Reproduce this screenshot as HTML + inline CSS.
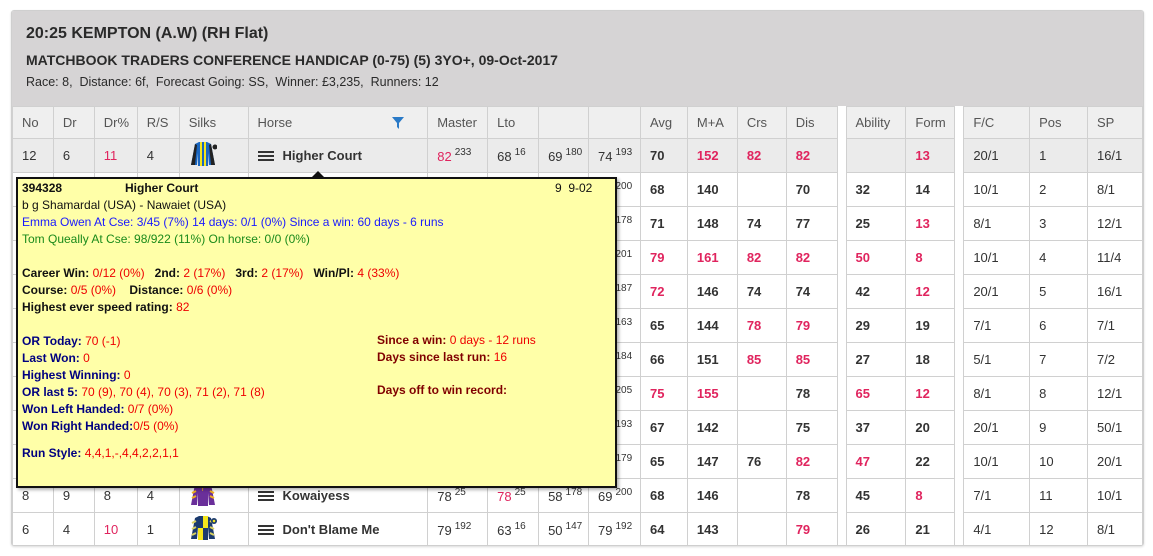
<!DOCTYPE html>
<html><head><meta charset="utf-8">
<style>
body{margin:0;background:#fff;font-family:"Liberation Sans",sans-serif;width:1153px;height:556px;overflow:hidden;position:relative}
.box{position:absolute;left:11px;top:10px;width:1131px;height:534px;border:1px solid #cfcfcf;border-radius:3px;box-shadow:0 1px 2px rgba(0,0,0,.15);overflow:hidden}
.hd{background:#d6d4d5;height:95px;padding:0 0 0 14px;color:#222}
.h1{position:absolute;top:14px;left:14px;font-size:16px;font-weight:bold;color:#2a2a2a}
.h2{position:absolute;top:41px;left:14px;font-size:14px;font-weight:bold;color:#2a2a2a}
.h3{position:absolute;top:64px;left:14px;font-size:12.5px;color:#2a2a2a}
table{position:absolute;left:0;top:95px;border-collapse:collapse;table-layout:fixed;font-size:13px;color:#333}
td{border:1px solid #d0d0d0;height:33px;padding:0 0 0 9px;white-space:nowrap;overflow:hidden;vertical-align:middle}
tr.th td{background:#efefef;color:#555;height:31px}
tr.r1 td{background:#ebebeb}
td.g{border:none;background:#fff!important;padding:0}
.b{font-weight:bold}
.r{color:#e0245e}
sup{font-size:10px;vertical-align:6px;margin-left:3px}
.ham{display:inline-block;width:16px;height:10px;border-top:2px solid #333;border-bottom:2px solid #333;position:relative;vertical-align:-1px;margin-right:9px;box-sizing:border-box}
.ham:after{content:"";position:absolute;left:0;right:0;top:2px;border-top:2px solid #333}
.tip{position:absolute;left:16px;top:177px;width:597px;height:307px;background:#ffffa8;border:2px solid #111;box-shadow:2px 2px 3px rgba(0,0,0,.3);font-size:12px;color:#111;line-height:17px}
.tip div{position:absolute;white-space:nowrap}
.nv{color:#000080}.rd{color:#e00}.mr{color:#800000}
.arrow{position:absolute;left:312px;top:171px;width:0;height:0;border-left:6px solid transparent;border-right:6px solid transparent;border-bottom:6px solid #111}
</style></head><body>
<div class="box">
<div class="hd"></div>
<div class="h1">20:25 KEMPTON (A.W) (RH Flat)</div>
<div class="h2">MATCHBOOK TRADERS CONFERENCE HANDICAP (0-75) (5) 3YO+, 09-Oct-2017</div>
<div class="h3">Race: 8,&nbsp; Distance: 6f,&nbsp; Forecast Going: SS,&nbsp; Winner: £3,235,&nbsp; Runners: 12</div>
<table>
<colgroup><col style="width:41px"><col style="width:41px"><col style="width:43px"><col style="width:42px"><col style="width:69px"><col style="width:180px"><col style="width:60px"><col style="width:51px"><col style="width:50px"><col style="width:52px"><col style="width:47px"><col style="width:50px"><col style="width:49px"><col style="width:51px"><col style="width:9px"><col style="width:60px"><col style="width:49px"><col style="width:9px"><col style="width:66px"><col style="width:58px"><col style="width:55px"></colgroup>
<tr class="th"><td>No</td><td>Dr</td><td>Dr%</td><td>R/S</td><td>Silks</td><td>Horse<svg width="12" height="12" style="position:relative;left:100px;top:2px" viewBox="0 0 12 12"><path d="M0 0H12L7 6V12L5 10V6Z" fill="#2a7ac7"/></svg></td><td>Master</td><td>Lto</td><td></td><td></td><td>Avg</td><td>M+A</td><td>Crs</td><td>Dis</td><td class="g"></td><td>Ability</td><td>Form</td><td class="g"></td><td>F/C</td><td>Pos</td><td>SP</td></tr>
<tr class="r1"><td>12</td><td>6</td><td class="r">11</td><td>4</td><td><svg width="28" height="26" viewBox="0 0 28 26"><path d="M6 3L10 1H18L22 3L26 24H20L19 12V25H9V12L8 24H2Z" fill="#1a66c0"/><path d="M6 3L2 24H6L8 4Z" fill="#222"/><path d="M22 3L26 24H22L20 4Z" fill="#222"/><rect x="11" y="1" width="2" height="24" fill="#f3e51c"/><rect x="15" y="1" width="2" height="24" fill="#f3e51c"/><circle cx="26" cy="6" r="2.5" fill="#222"/></svg></td><td><span class="ham"></span><span class="b">Higher Court</span></td><td><span class="r">82</span><sup>233</sup></td><td>68<sup>16</sup></td><td>69<sup>180</sup></td><td>74<sup>193</sup></td><td class="b">70</td><td class="b r">152</td><td class="b r">82</td><td class="b r">82</td><td class="g"></td><td class="b"></td><td class="b r">13</td><td class="g"></td><td>20/1</td><td>1</td><td>16/1</td></tr>
<tr><td></td><td></td><td></td><td></td><td></td><td></td><td></td><td></td><td></td><td>70<sup>200</sup></td><td class="b">68</td><td class="b">140</td><td class="b"></td><td class="b">70</td><td class="g"></td><td class="b">32</td><td class="b">14</td><td class="g"></td><td>10/1</td><td>2</td><td>8/1</td></tr>
<tr><td></td><td></td><td></td><td></td><td></td><td></td><td></td><td></td><td></td><td>70<sup>178</sup></td><td class="b">71</td><td class="b">148</td><td class="b">74</td><td class="b">77</td><td class="g"></td><td class="b">25</td><td class="b r">13</td><td class="g"></td><td>8/1</td><td>3</td><td>12/1</td></tr>
<tr><td></td><td></td><td></td><td></td><td></td><td></td><td></td><td></td><td></td><td>70<sup>201</sup></td><td class="b r">79</td><td class="b r">161</td><td class="b r">82</td><td class="b r">82</td><td class="g"></td><td class="b r">50</td><td class="b r">8</td><td class="g"></td><td>10/1</td><td>4</td><td>11/4</td></tr>
<tr><td></td><td></td><td></td><td></td><td></td><td></td><td></td><td></td><td></td><td>70<sup>187</sup></td><td class="b r">72</td><td class="b">146</td><td class="b">74</td><td class="b">74</td><td class="g"></td><td class="b">42</td><td class="b r">12</td><td class="g"></td><td>20/1</td><td>5</td><td>16/1</td></tr>
<tr><td></td><td></td><td></td><td></td><td></td><td></td><td></td><td></td><td></td><td>70<sup>163</sup></td><td class="b">65</td><td class="b">144</td><td class="b r">78</td><td class="b r">79</td><td class="g"></td><td class="b">29</td><td class="b">19</td><td class="g"></td><td>7/1</td><td>6</td><td>7/1</td></tr>
<tr><td></td><td></td><td></td><td></td><td></td><td></td><td></td><td></td><td></td><td>70<sup>184</sup></td><td class="b">66</td><td class="b">151</td><td class="b r">85</td><td class="b r">85</td><td class="g"></td><td class="b">27</td><td class="b">18</td><td class="g"></td><td>5/1</td><td>7</td><td>7/2</td></tr>
<tr><td></td><td></td><td></td><td></td><td></td><td></td><td></td><td></td><td></td><td>70<sup>205</sup></td><td class="b r">75</td><td class="b r">155</td><td class="b"></td><td class="b">78</td><td class="g"></td><td class="b r">65</td><td class="b r">12</td><td class="g"></td><td>8/1</td><td>8</td><td>12/1</td></tr>
<tr><td></td><td></td><td></td><td></td><td></td><td></td><td></td><td></td><td></td><td>70<sup>193</sup></td><td class="b">67</td><td class="b">142</td><td class="b"></td><td class="b">75</td><td class="g"></td><td class="b">37</td><td class="b">20</td><td class="g"></td><td>20/1</td><td>9</td><td>50/1</td></tr>
<tr><td></td><td></td><td></td><td></td><td></td><td></td><td></td><td></td><td></td><td>70<sup>179</sup></td><td class="b">65</td><td class="b">147</td><td class="b">76</td><td class="b r">82</td><td class="g"></td><td class="b r">47</td><td class="b">22</td><td class="g"></td><td>10/1</td><td>10</td><td>20/1</td></tr>
<tr><td>8</td><td>9</td><td>8</td><td>4</td><td><svg width="28" height="26" viewBox="0 0 28 26"><path d="M6 3L10 1H18L22 3L26 24H20L19 12V25H9V12L8 24H2Z" fill="#6a2f9a"/><path d="M3 12L7 10M3 17L7 15M21 10L25 12M21 15L25 17" stroke="#f0b020" stroke-width="2"/><text x="11" y="10" font-size="8" fill="#f0b020" font-family="Liberation Sans">Y</text><rect x="24" y="1" width="4" height="6" fill="#ddd"/></svg></td><td><span class="ham"></span><span class="b">Kowaiyess</span></td><td>78<sup>25</sup></td><td><span class="r">78</span><sup>25</sup></td><td>58<sup>178</sup></td><td>69<sup>200</sup></td><td class="b">68</td><td class="b">146</td><td class="b"></td><td class="b">78</td><td class="g"></td><td class="b">45</td><td class="b r">8</td><td class="g"></td><td>7/1</td><td>11</td><td>10/1</td></tr>
<tr><td>6</td><td>4</td><td class="r">10</td><td>1</td><td><svg width="28" height="26" viewBox="0 0 28 26"><path d="M6 3L10 1H18L22 3L26 24H20L19 12V25H9V12L8 24H2Z" fill="#1b3a6e"/><rect x="14" y="1" width="5" height="12" fill="#f3e51c"/><rect x="9" y="13" width="5" height="12" fill="#f3e51c"/><path d="M3 8L7 6M3 14L7 12M3 20L7 18M21 6L25 8M21 12L25 14M21 18L25 20" stroke="#d8d060" stroke-width="2"/><circle cx="25" cy="6" r="3" fill="#1b3a6e"/><circle cx="25" cy="6" r="1.3" fill="#f3e51c"/></svg></td><td><span class="ham"></span><span class="b">Don't Blame Me</span></td><td>79<sup>192</sup></td><td>63<sup>16</sup></td><td>50<sup>147</sup></td><td>79<sup>192</sup></td><td class="b">64</td><td class="b">143</td><td class="b"></td><td class="b r">79</td><td class="g"></td><td class="b">26</td><td class="b">21</td><td class="g"></td><td>4/1</td><td>12</td><td>8/1</td></tr>
</table>
</div>
<div class="arrow"></div>
<div class="tip">
<div class="b" style="left:4px;top:1px">394328</div>
<div class="b" style="left:107px;top:1px">Higher Court</div>
<div style="left:537px;top:1px">9&nbsp; 9-02</div>
<div style="left:4px;top:18px">b g Shamardal (USA) - Nawaiet (USA)</div>
<div style="left:4px;top:35px;color:#1a1aff">Emma Owen At Cse: 3/45 (7%) 14 days: 0/1 (0%) Since a win: 60 days - 6 runs</div>
<div style="left:4px;top:52px;color:#1a8a1a">Tom Queally At Cse: 98/922 (11%) On horse: 0/0 (0%)</div>
<div style="left:4px;top:86px"><b>Career Win:</b> <span class="rd">0/12 (0%)</span>&nbsp;&nbsp; <b>2nd:</b> <span class="rd">2 (17%)</span>&nbsp;&nbsp; <b>3rd:</b> <span class="rd">2 (17%)</span>&nbsp;&nbsp; <b>Win/Pl:</b> <span class="rd">4 (33%)</span></div>
<div style="left:4px;top:103px"><b>Course:</b> <span class="rd">0/5 (0%)</span>&nbsp;&nbsp;&nbsp; <b>Distance:</b> <span class="rd">0/6 (0%)</span></div>
<div style="left:4px;top:120px"><b>Highest ever speed rating:</b> <span class="rd">82</span></div>
<div class="nv" style="left:4px;top:154px"><b>OR Today:</b> <span class="rd">70 (-1)</span></div>
<div class="nv" style="left:4px;top:171px"><b>Last Won:</b> <span class="rd">0</span></div>
<div class="nv" style="left:4px;top:188px"><b>Highest Winning:</b> <span class="rd">0</span></div>
<div class="nv" style="left:4px;top:205px"><b>OR last 5:</b> <span class="rd">70 (9), 70 (4), 70 (3), 71 (2), 71 (8)</span></div>
<div class="nv" style="left:4px;top:222px"><b>Won Left Handed:</b> <span class="rd">0/7 (0%)</span></div>
<div class="nv" style="left:4px;top:239px"><b>Won Right Handed:</b><span class="rd">0/5 (0%)</span></div>
<div class="nv" style="left:4px;top:266px"><b>Run Style:</b> <span class="rd">4,4,1,-,4,4,2,2,1,1</span></div>
<div class="mr" style="left:359px;top:153px"><b>Since a win:</b> <span class="rd">0 days - 12 runs</span></div>
<div class="mr" style="left:359px;top:170px"><b>Days since last run:</b> <span class="rd">16</span></div>
<div class="mr" style="left:359px;top:203px"><b>Days off to win record:</b></div>
</div>
</body></html>
